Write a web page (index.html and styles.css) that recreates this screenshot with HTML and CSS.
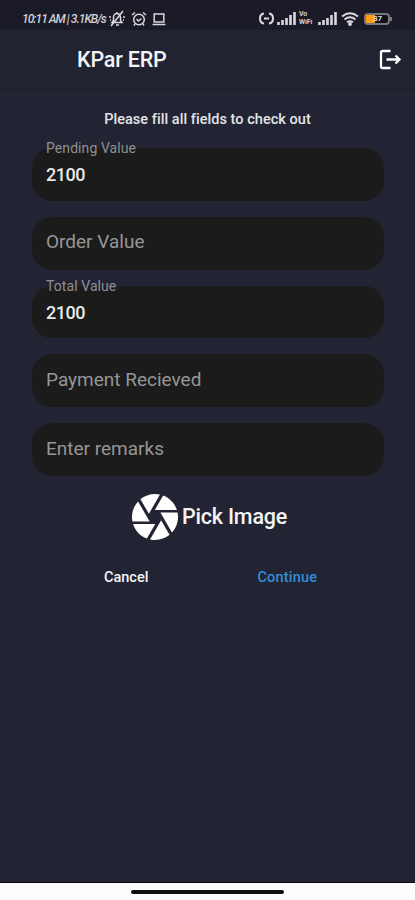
FILE: index.html
```html
<!DOCTYPE html>
<html lang="en">
<head>
<meta charset="utf-8">
<title>KPar ERP</title>
<link rel="stylesheet" href="styles.css">
</head>
<body>
<div class="status">
  <span class="clock">10:11 AM | 3.1KB/s</span>
  <svg class="bell" width="18" height="17" viewBox="0 0 18 17"><path d="M4 12.500h10l-1.500-2V7a3.500 3.500 0 0 0-7 0v3.500zM8 15h3M9 2v1M15 1 3 16M1 7h2M15 7h2M2 10h1M15 10h1" /></svg>
  <svg class="alarm" width="16" height="16" viewBox="0 0 16 16"><circle cx="8" cy="8.500" r="5.300"/><path d="M1 4 4 1.500M12 1.500 15 4M5.500 8l2 2 3-2.500M4 13l-1 1.500M12 13l1 1.500"/></svg>
  <svg class="laptop" width="14" height="14" viewBox="0 0 14 14"><rect x="2.200" y="2" width="9.600" height="8"/><path d="M.5 12.500h13"/></svg>
  <svg class="link" width="15" height="13" viewBox="0 0 15 13"><path d="M5 1.500Q1 2 1 6.500T5 11.500M10 1.500q4 .5 4 5t-4 5M5 6.500h5"/></svg>
  <svg class="signal" width="19" height="13" viewBox="0 0 19 13"><path d="M1.500 10v3M5.500 8v5M9.500 6v7M13.500 3v10M17.500 0v13"/></svg>
  <span class="vowifi"><span>Vo</span><span>WiFi</span></span>
  <svg class="signal" width="19" height="13" viewBox="0 0 19 13"><path d="M1.500 10v3M5.500 8v5M9.500 6v7M13.500 3v10M17.500 0v13"/></svg>
  <svg class="wifi" width="18" height="14" viewBox="0 0 18 14"><path d="M1 4.500q8-6.500 16 0M3.500 7.500q5.500-4.500 11 0M6 10.300q3-2.300 6 0"/><circle cx="9" cy="12" r="1"/></svg>
  <span class="battery"><span class="charge"></span><span class="level">37</span></span>
</div>
<header class="bar">
  <h1>KPar ERP</h1>
  <svg class="logout" width="24" height="24" viewBox="0 0 24 24"><path d="M12.500 3H4.500Q3 3 3 4.500v14Q3 20 4.500 20h8M8.500 11.500h13M17.500 7.500l4 4-4 4"/></svg>
</header>
<main>
  <p class="intro">Please fill all fields to check out</p>
  <form class="fields">
    <div class="field filled"><label class="pending">Pending Value</label><span class="value">2100</span></div>
    <div class="field"><span class="hint">Order Value</span></div>
    <div class="field filled"><label class="total">Total Value</label><span class="value">2100</span></div>
    <div class="field"><span class="hint">Payment Recieved</span></div>
    <div class="field"><span class="hint">Enter remarks</span></div>
  </form>
  <div class="pick">
    <svg width="46" height="46" viewBox="2 2 20 20"><path d="M9.400 10.500l4.770-8.260C13.470 2.090 12.750 2 12 2c-2.400 0-4.600.85-6.320 2.250l3.660 6.350.06-.1zM21.540 9c-.92-2.920-3.150-5.260-6-6.340L11.880 9h9.660zm.26 1h-7.490l.29.5 4.760 8.250C21 16.970 22 14.610 22 12c0-.69-.07-1.350-.2-2zM8.540 12l-3.900-6.750C3.010 7.030 2 9.390 2 12c0 .69.07 1.350.2 2h7.490l-1.150-2zm-6.080 3c.92 2.920 3.150 5.260 6 6.340L12.120 15H2.460zm11.270 0l-3.900 6.760c.7.15 1.420.24 2.170.24 2.400 0 4.600-.85 6.320-2.250l-3.660-6.350-.93 1.600z"/></svg>
    <span class="pick-label">Pick Image</span>
  </div>
  <div class="actions"><span class="cancel">Cancel</span><span class="continue">Continue</span></div>
</main>
<footer><div class="handle"></div></footer>
</body>
</html>
```
FILE: styles.css
```css
* { box-sizing: border-box; }
body {
  margin: 0;
  height: 900px;
  display: flex;
  flex-direction: column;
  overflow: hidden;
  background: #222433;
  color: #f4f4f6;
  font-family: Roboto, sans-serif;
}
svg { display: block; flex: none; fill: none; stroke: #d8d8de; stroke-width: 1.5; }
.status {
  height: 30px;
  flex: none;
  display: flex;
  align-items: center;
  padding: 7px 22px 0;
  background: #1b1b27;
}
.clock {
  width: 86px;
  white-space: nowrap;
  font: italic 500 12px/16px Roboto, sans-serif;
  letter-spacing: -0.95px;
  color: #d0d0d6;
}
.alarm { margin-left: 5px; }
.laptop { margin-left: 5px; }
.link { margin-left: 93px; stroke-width: 2; }
.signal { margin-left: 3px; stroke-width: 2.600; }
.vowifi {
  width: 16px;
  margin-left: 3px;
  display: flex;
  flex-direction: column;
  gap: 1px;
  font: 700 7px/7px Roboto, sans-serif;
  letter-spacing: -0.1px;
  color: #d0d0d6;
}
.vowifi span { height: 7px; overflow: hidden; }
.wifi { margin-left: 4px; stroke-width: 1.900; }
.battery {
  position: relative;
  width: 26px;
  height: 12px;
  margin-left: 5px;
  flex: none;
  border: 2px solid #777780;
  border-radius: 4px;
  background: #111116;
}
.battery::after {
  content: "";
  position: absolute;
  left: 24px;
  top: 2px;
  width: 2px;
  height: 4px;
  background: #777780;
}
.charge { display: block; width: 9px; height: 8px; background: #ff9d17; }
.level { position: absolute; left: 7px; top: 0; font: 700 8px/8px Roboto, sans-serif; color: #ddd; }
.bar {
  height: 61px;
  flex: none;
  display: flex;
  align-items: center;
  justify-content: space-between;
  padding: 1px 13px 0 77px;
  background: #212331;
  border-bottom: 2px solid #1e202d;
}
h1 { margin: 0; font-size: 21.500px; line-height: 26px; font-weight: 500; letter-spacing: -0.2px; }
.logout { stroke: #fff; stroke-width: 2.300; }
main { flex: 1; }
.intro {
  margin: 19px 0 0;
  padding-top: 1px;
  text-align: center;
  font-size: 14.500px;
  line-height: 18px;
  font-weight: 500;
  letter-spacing: 0.04px;
  color: #e4e4e8;
}
.fields {
  display: flex;
  flex-direction: column;
  gap: 16px;
  margin: 19px 31px 0 32px;
}
.field {
  height: 52.800px;
  display: flex;
  flex-direction: column;
  justify-content: center;
  padding: 0 14px;
  border-radius: 20px;
  background: #1b1b1b;
}
.filled { justify-content: flex-start; }
label { margin-top: -9px; font-size: 14px; line-height: 18px; color: #8f9095; letter-spacing: 0.08px; }
.value { margin-top: 7px; font-size: 18px; line-height: 22px; font-weight: 500; color: #e8e8e8; letter-spacing: -0.65px; }
.value { letter-spacing: -0.5px; }
.hint { margin-top: -2px; font-size: 19px; line-height: 24px; color: #969696; }
.pick {
  display: flex;
  align-items: center;
  gap: 4px;
  margin: 18px 0 0 132px;
  font-size: 21.500px;
  line-height: 26px;
  font-weight: 500;
  letter-spacing: -0.2px;
}
.pick svg { fill: #fff; stroke: none; }
.actions {
  display: flex;
  margin: 29px 0 0 104px;
  gap: 109px;
  font-size: 14.500px;
  line-height: 18px;
  font-weight: 500;
}
.continue { color: #338cda; letter-spacing: 0.2px; }
footer {
  height: 18px;
  flex: none;
  padding-top: 7px;
  background: #fdfdfd;
  border-top: 1px solid #080a12;
}
.handle { width: 153px; height: 4px; margin: 0 auto; border-radius: 2px; background: #111; }
```
